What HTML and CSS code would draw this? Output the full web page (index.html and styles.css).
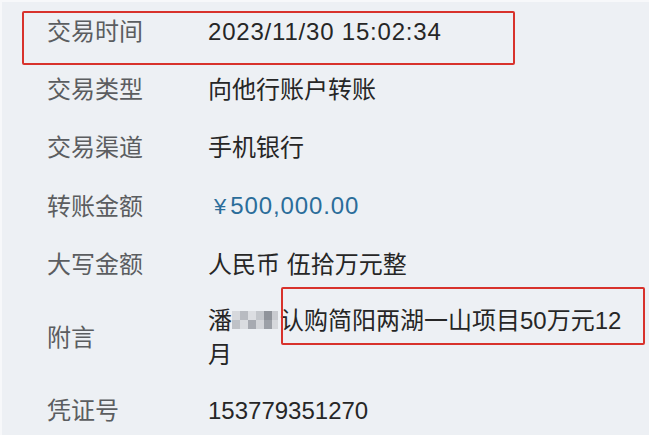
FILE: index.html
```html
<!DOCTYPE html>
<html lang="zh-CN">
<head>
    <meta charset="UTF-8">
    <meta name="viewport" content="width=device-width, initial-scale=1.0">
    <title>交易详情</title>
    <link rel="stylesheet" href="styles.css">
</head>
<body>
    <div class="detail">
        <div class="row">
            <span class="label">交易时间</span>
            <span class="value time">2023/11/30 15:02:34</span>
        </div>
        <div class="row">
            <span class="label">交易类型</span>
            <span class="value">向他行账户转账</span>
        </div>
        <div class="row">
            <span class="label">交易渠道</span>
            <span class="value">手机银行</span>
        </div>
        <div class="row">
            <span class="label">转账金额</span>
            <span class="value amount"><span class="yen">¥</span>500,000.00</span>
        </div>
        <div class="row">
            <span class="label">大写金额</span>
            <span class="value">人民币 伍拾万元整</span>
        </div>
        <div class="row row-note">
            <span class="label">附言</span>
            <span class="value">潘<svg class="mosaic" width="46" height="26" viewBox="0 0 46 26">
                <rect x="0" y="4" width="8" height="9" fill="#d6d8dc"/>
                <rect x="8" y="4" width="8" height="9" fill="#b8bbc1"/>
                <rect x="16" y="4" width="8" height="9" fill="#dcdee2"/>
                <rect x="24" y="4" width="8" height="9" fill="#c3c6cb"/>
                <rect x="32" y="4" width="8" height="9" fill="#8f939a"/>
                <rect x="40" y="4" width="6" height="9" fill="#c9cbd0"/>
                <rect x="0" y="13" width="8" height="9" fill="#bfc2c7"/>
                <rect x="8" y="13" width="8" height="9" fill="#dadce0"/>
                <rect x="16" y="13" width="8" height="9" fill="#a7aab1"/>
                <rect x="24" y="13" width="8" height="9" fill="#d3d5d9"/>
                <rect x="32" y="13" width="8" height="9" fill="#9ca0a7"/>
                <rect x="40" y="13" width="6" height="9" fill="#d6d8dc"/>
            </svg>认购简阳两湖一山项目50万元12月</span>
        </div>
        <div class="row">
            <span class="label">凭证号</span>
            <span class="value">153779351270</span>
        </div>
    </div>

    <div class="mark mark-time"></div>
    <div class="mark mark-note"></div>
</body>
</html>
```

FILE: styles.css
```css
* {
    margin: 0;
    padding: 0;
    box-sizing: border-box;
}

body {
    font-family: "Liberation Sans", "Noto Sans CJK SC", sans-serif;
    background: #edf0f4;
    color: #262626;
    width: 649px;
    height: 435px;
    overflow: hidden;
    position: relative;
    border-left: 2px solid #f7f8fa;
    border-top: 2px solid #f7f8fa;
}

.detail {
    padding-top: 1px;
}

.row {
    display: grid;
    grid-template-columns: 161px 1fr;
    align-items: center;
    padding: 12px 10px 12px 45px;
    font-size: 24px;
    line-height: 34px;
}

.row-note {
    padding-top: 10px;
    padding-bottom: 10px;
}

.label {
    color: #5b5d60;
}

.value {
    color: #262626;
}

.time {
    letter-spacing: 0.8px;
}

.amount {
    color: #2b6d9a;
    letter-spacing: 0.9px;
}

.yen {
    display: inline-block;
    margin-left: 6px;
    margin-right: 3px;
    font-size: 22px;
}

.mosaic {
    vertical-align: -4px;
    margin-right: 2px;
}

/* red highlight frames drawn over the record */
.mark {
    position: absolute;
    border: 2px solid #d8322c;
    border-radius: 2px;
}

.mark-time {
    left: 20px;
    top: 9px;
    width: 493px;
    height: 54px;
}

.mark-note {
    left: 279px;
    top: 285px;
    width: 364px;
    height: 58px;
}
```
